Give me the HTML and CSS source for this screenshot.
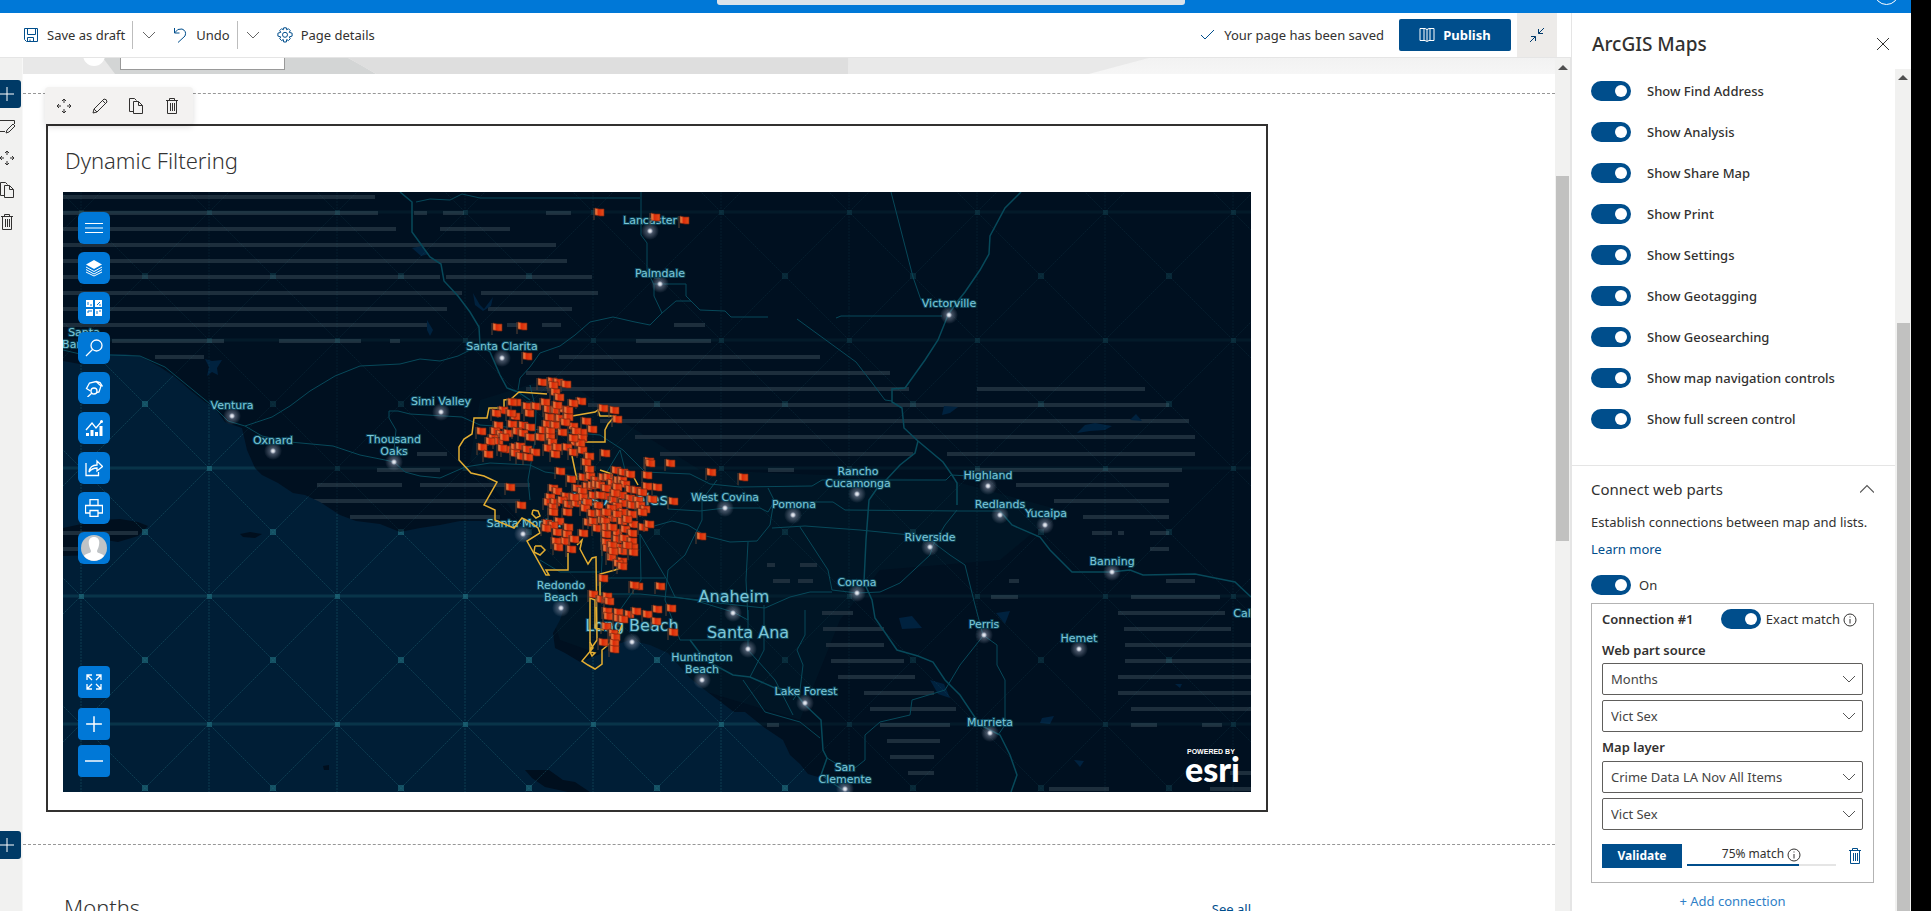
FILE: index.html
```
<!DOCTYPE html>
<html lang="en">
<head>
    <meta charset="UTF-8">
    <title>ArcGIS Maps - edit page</title>
    <link rel="stylesheet" href="styles.css">
</head>
<body>
    <!-- shared icons -->
    <svg class="sprite" aria-hidden="true">
        <symbol id="i-move" viewBox="0 0 16 16"><path d="M8 1v4M8 11v4M1 8h4M11 8h4M6 3l2-2 2 2M6 13l2 2 2-2M3 6L1 8l2 2M13 6l2 2-2 2"/></symbol>
        <symbol id="i-pencil" viewBox="0 0 16 16"><path d="M1 15l1-4L12 1q3 0 3 3L5 14zM2 11l3 3M10.500 2.500l3 3"/></symbol>
        <symbol id="i-copy" viewBox="0 0 16 16"><path d="M5.500 13.500h-4v-13h5l2 2M5.500 3.500h5l4 4v8h-9zM10.500 3.500v4h4"/></symbol>
        <symbol id="i-trash" viewBox="0 0 16 16"><path d="M2 2.500h12M5.500 2.500v-2h5v2M3.500 2.500v13h9v-13M6.500 5v8M8.500 5v8M10.500 5v8"/></symbol>
        <symbol id="i-plus" viewBox="0 0 16 16"><path d="M8 1v14M1 8h14"/></symbol>
        <symbol id="i-down" viewBox="0 0 12 12"><path d="M0 3l6 6 6-6"/></symbol>
        <symbol id="i-info" viewBox="0 0 14 14"><circle cx="7" cy="7" r="6"/><path d="M7 6v4.500M7 3.500v1"/></symbol>
    </svg>

    <header class="suite">
        <div class="suite_search"></div>
        <div class="suite_user"></div>
    </header>

    <div class="app">
        <div class="editor">
            <div class="bar">
                <button type="button" class="cmd">
                    <svg class="ico" viewBox="0 0 16 16"><path d="M1.500 1.500h13v13h-11l-2-2zM4.500 1.500v6h8v-6M4.500 14.500v-4h6v4M7 14.500v-2"/></svg>
                    Save as draft
                </button>
                <button type="button" class="cmd_more" aria-label="More save options"><svg class="ico"><use href="#i-down"/></svg></button>
                <button type="button" class="cmd">
                    <svg class="ico" viewBox="0 0 16 16"><path d="M2.500 1v5h5M2.500 6q3-5 7.500-4 5 2 3 7L6 15.500"/></svg>
                    Undo
                </button>
                <button type="button" class="cmd_more" aria-label="More undo options"><svg class="ico"><use href="#i-down"/></svg></button>
                <button type="button" class="cmd">
                    <svg class="ico" viewBox="0 0 16 16"><path d="M6.700.8h2.600l.4 2 1.700-1.100 1.900 1.900-1.100 1.700 2.900.9v2.900l-2.900.8 1.100 1.800-1.900 1.900-1.700-1.100-.4 2.500H6.700l-.4-2.500-1.700 1.100-1.900-1.900 1.100-1.800-2.900-.8V6.200l2.900-.9-1.100-1.700 1.900-1.900 1.700 1.100z"/><circle cx="8" cy="7.800" r="2.500"/></svg>
                    Page details
                </button>
                <div class="bar_end">
                    <span class="saved">
                        <svg class="ico" viewBox="0 0 16 16"><path d="M1 8l4 4L14 3"/></svg>
                        Your page has been saved
                    </span>
                    <button type="button" class="publish">
                        <svg class="ico" viewBox="0 0 16 16"><path d="M1 1.500h5l2 1 2-1h5v12h-5l-2 1-2-1H1zM5 1.500v12M8 2v12M11 1.500v12"/></svg>
                        Publish
                    </button>
                    <button type="button" class="collapse" aria-label="Collapse">
                        <svg class="ico" viewBox="0 0 16 16"><path d="M15 1L9.500 6.500M9.500 2v4.500H14M1 15l5.500-5.500M2 9.500h4.500V14"/></svg>
                    </button>
                </div>
            </div>

            <div class="scroller">
                <div class="canvas">
                    <div class="banner">
                        <svg class="banner_art" viewBox="0 0 1531 16" preserveAspectRatio="xMinYMin slice"><path d="M0 0h80l15 16H0z" fill="#e8e8e8"/><path d="M80 0h245q15 8 28 16H92z" fill="#d3d5d5"/><path d="M325 0h500v16H353q-14-8-28-16z" fill="#dedede"/><path d="M825 0h300l-60 16H825z" fill="#e9e9e9"/><circle cx="71" cy="-3" r="11" fill="#fff"/></svg>
                        <div class="banner_box"></div>
                    </div>

                    <section class="section">
                        <div class="rail">
                            <button type="button" class="rail_add" aria-label="Add section"><svg class="ico"><use href="#i-plus"/></svg></button>
                            <button type="button" aria-label="Edit section"><svg class="ico" viewBox="0 0 16 16"><path d="M0 2.500h15.500V6M0 13.500h6M7 15l1-3 6-6 2 2-6 6z"/></svg></button>
                            <button type="button" aria-label="Move section"><svg class="ico"><use href="#i-move"/></svg></button>
                            <button type="button" aria-label="Duplicate section"><svg class="ico"><use href="#i-copy"/></svg></button>
                            <button type="button" aria-label="Delete section"><svg class="ico"><use href="#i-trash"/></svg></button>
                        </div>
                        <div class="section_body">
                            <div class="tools">
                                <button type="button" aria-label="Move web part"><svg class="ico"><use href="#i-move"/></svg></button>
                                <button type="button" aria-label="Edit web part"><svg class="ico"><use href="#i-pencil"/></svg></button>
                                <button type="button" aria-label="Duplicate web part"><svg class="ico"><use href="#i-copy"/></svg></button>
                                <button type="button" aria-label="Delete web part"><svg class="ico"><use href="#i-trash"/></svg></button>
                            </div>
                            <article class="card">
                                <h2>Dynamic Filtering</h2>
                                <div class="map">
                                    <svg id="map" class="map_svg" viewBox="63 192 1188 600" preserveAspectRatio="xMinYMin slice" role="img" aria-label="Map of Los Angeles area"></svg>
                                    <div class="map_btns map_top">
                                        <button type="button" aria-label="Menu"><svg class="ico" viewBox="0 0 18 18"><path d="M0 4.500h18M0 9h18M0 13.500h18"/></svg></button>
                                        <button type="button" aria-label="Layers"><svg class="ico" viewBox="0 0 18 18"><path class="fill" d="M9 1l8 4.500L9 10 1 5.500z"/><path d="M1 8l8 4.500L17 8M1 10.500L9 15l8-4.500M1 13l8 4 8-4"/></svg></button>
                                        <button type="button" aria-label="Basemaps"><svg class="ico" viewBox="0 0 18 18"><path class="fill" d="M1 1h7v7H1zM10 1h7v7h-7zM1 10h7v7H1zM10 10h7v7h-7z"/><path class="cut" d="M3 6V3M5 6h2M12 6l3-3M14 6h2M3 12h4M3 14v-2M12 12v3M14 12h2"/></svg></button>
                                        <button type="button" aria-label="Find address"><svg class="ico ico_bold" viewBox="0 0 18 18"><circle cx="11.500" cy="6.500" r="5.500"/><path d="M7.500 10.500L1 17"/></svg></button>
                                        <button type="button" aria-label="Geosearch"><svg class="ico ico_bold" viewBox="0 0 18 18"><path d="M5.500 12L1.500 9.500l3-5.500 6.500-1.500 5 4.500-2 6-2 .5M11 2.500l4 1 2.500 4"/><circle cx="9" cy="12" r="3"/><path d="M7 14l-4.500 4"/></svg></button>
                                        <button type="button" aria-label="Analysis"><svg class="ico ico_bold" viewBox="0 0 18 18"><path class="fill" d="M1 14h3v3H1zM5.500 11h3v6h-3zM10 13h3v4h-3zM14.500 7h3v10h-3z"/><path d="M1 11l6-7 4 5 6-7"/><circle class="fill" cx="16.500" cy="2.500" r="1.500"/></svg></button>
                                        <button type="button" aria-label="Share map"><svg class="ico ico_bold" viewBox="0 0 18 18"><path d="M1 4v12.500h12.500V13M4 13q1-7 8-7V2l5.500 5.500L12 12V9q-5 0-8 4z"/></svg></button>
                                        <button type="button" aria-label="Print"><svg class="ico ico_bold" viewBox="0 0 18 18"><path d="M5 6.500v-6h8v6M5 14H.500V6.500h17V14H13M5 11.500h8v6H5z"/></svg></button>
                                        <button type="button" aria-label="Account" class="map_user"><svg viewBox="0 0 26 26"><circle cx="13" cy="13" r="13" fill="#bfc3c6"/><path d="M13 2c4 0 6 3 5 8-.5 3-1.500 4-2 6 0 3 6 2 7 5a13 13 0 0 1-20 0c1-3 7-2 7-5-.5-2-1.500-3-2-6-1-5 1-8 5-8z" fill="#fff"/></svg></button>
                                    </div>
                                    <div class="map_btns map_bottom">
                                        <button type="button" aria-label="Full screen" class="map_full"><svg class="ico ico_bold" viewBox="0 0 18 18"><path d="M2 7V2h5M11 2h5v5M16 11v5h-5M7 16H2v-5M2 2l5 5M16 2l-5 5M16 16l-5-5M2 16l5-5"/></svg></button>
                                        <button type="button" aria-label="Zoom in"><svg class="ico ico_bold"><use href="#i-plus"/></svg></button>
                                        <button type="button" aria-label="Zoom out"><svg class="ico ico_bold" viewBox="0 0 16 16"><path d="M0 8h16"/></svg></button>
                                    </div>
                                    <div class="esri"><small>POWERED BY</small><b>esri</b></div>
                                </div>
                            </article>
                        </div>
                    </section>

                    <section class="section section_last">
                        <div class="rail">
                            <button type="button" class="rail_add" aria-label="Add section"><svg class="ico"><use href="#i-plus"/></svg></button>
                        </div>
                        <div class="section_body">
                            <div class="list_head">
                                <h2>Months</h2>
                                <a href="#">See all</a>
                            </div>
                        </div>
                    </section>
                </div>
                <div class="track track_main"><i></i><span></span></div>
            </div>
        </div>

        <aside class="panel">
            <div class="panel_head">
                <h1>ArcGIS Maps</h1>
                <button type="button" aria-label="Close"><svg class="ico" viewBox="0 0 16 16"><path d="M2 2l12 12M14 2L2 14"/></svg></button>
            </div>
            <div class="panel_scroll">
                <div class="panel_body">
                    <div class="options">
                        <label><input type="checkbox" class="toggle" checked>Show Find Address</label>
                        <label><input type="checkbox" class="toggle" checked>Show Analysis</label>
                        <label><input type="checkbox" class="toggle" checked>Show Share Map</label>
                        <label><input type="checkbox" class="toggle" checked>Show Print</label>
                        <label><input type="checkbox" class="toggle" checked>Show Settings</label>
                        <label><input type="checkbox" class="toggle" checked>Show Geotagging</label>
                        <label><input type="checkbox" class="toggle" checked>Show Geosearching</label>
                        <label><input type="checkbox" class="toggle" checked>Show map navigation controls</label>
                        <label><input type="checkbox" class="toggle" checked>Show full screen control</label>
                    </div>

                    <div class="connect">
                        <button type="button" class="connect_head">Connect web parts <svg class="ico"><use href="#i-down"/></svg></button>
                        <p>Establish connections between map and lists.</p>
                        <p><a href="#">Learn more</a></p>
                        <label class="connect_on"><input type="checkbox" class="toggle" checked>On</label>

                        <div class="conn">
                            <div class="conn_head">
                                <strong>Connection #1</strong>
                                <label><input type="checkbox" class="toggle" checked>Exact match</label>
                                <svg class="ico info"><use href="#i-info"/></svg>
                            </div>
                            <label class="conn_label" for="source">Web part source</label>
                            <div class="pick"><select id="source"><option>Months</option></select><svg class="ico"><use href="#i-down"/></svg></div>
                            <div class="pick"><select aria-label="Source field"><option>Vict Sex</option></select><svg class="ico"><use href="#i-down"/></svg></div>
                            <label class="conn_label" for="layer">Map layer</label>
                            <div class="pick"><select id="layer"><option>Crime Data LA Nov All Items</option></select><svg class="ico"><use href="#i-down"/></svg></div>
                            <div class="pick"><select aria-label="Layer field"><option>Vict Sex</option></select><svg class="ico"><use href="#i-down"/></svg></div>
                            <div class="conn_foot">
                                <button type="button" class="validate">Validate</button>
                                <div class="match">
                                    <span>75% match <svg class="ico info"><use href="#i-info"/></svg></span>
                                    <div class="match_bar"><div style="width:75%"></div></div>
                                </div>
                                <button type="button" class="conn_del" aria-label="Delete connection"><svg class="ico"><use href="#i-trash"/></svg></button>
                            </div>
                        </div>
                        <a href="#" class="add">+ Add connection</a>
                    </div>
                </div>
                <div class="track track_panel"><i></i><span></span></div>
            </div>
        </aside>
        <div class="edge"></div>
    </div>

    <script src="map.js"></script>
</body>
</html>
```
FILE: styles.css
```
*{padding:0;margin:0;box-sizing:border-box;}
html,body{height:100%;}
body{display:flex;flex-direction:column;overflow:hidden;background:#fff;color:#323130;font:13px/20px "Noto Sans","Open Sans",sans-serif;}
button{font:inherit;color:inherit;background:none;border:none;display:flex;align-items:center;justify-content:center;}
a{color:#004e8c;text-decoration:none;}
.sprite{position:absolute;width:0;height:0;}
.ico{width:16px;height:16px;flex:none;fill:none;stroke:currentColor;stroke-width:1;}

/* top bar */
.suite{height:13px;flex:none;background:#0078d7;border-right:20px solid #000;padding-right:10px;display:flex;justify-content:center;position:relative;overflow:hidden;}
.suite_search{width:468px;height:5px;background:#dbe3ea;border-radius:0 0 3px 3px;}
.suite_user{position:absolute;right:12px;top:-20px;width:25px;height:25px;border:1px solid #fff;border-radius:50%;}

.app{flex:1;min-height:0;display:flex;}
.editor{flex:1;min-width:0;display:flex;flex-direction:column;}
.edge{width:20px;background:#000;}

/* command bar */
.bar{height:45px;flex:none;display:flex;align-items:center;padding-left:23px;border-bottom:1px solid #e5e5e5;padding-right:14px;}
.cmd{gap:8px;padding-right:7px;}
.cmd .ico,.saved .ico{color:#004e8c;}
.cmd_more{width:40px;height:28px;border-left:1px solid #bdbdbd;padding-right:8px;color:#666;}
.cmd_more .ico{width:12px;height:12px;}
.bar_end{margin-left:auto;display:flex;align-items:center;align-self:stretch;}
.saved{display:flex;align-items:center;gap:8px;margin-right:15px;}
.publish{width:112px;height:32px;gap:8px;background:#004e8c;color:#fff;font-weight:700;border-radius:2px;margin-right:6px;}
.collapse{width:40px;align-self:stretch;background:#edebe9;color:#003a6c;}

/* page canvas */
.scroller{flex:1;min-height:0;display:flex;}
.canvas{flex:1;min-width:0;display:flex;flex-direction:column;overflow:hidden;background:linear-gradient(90deg,#f1f1f0 22px,#fff 23px);}
.banner{height:22px;flex:none;margin-left:23px;background:linear-gradient(#f2f2f2,#f6f6f6) top/100% 16px no-repeat #fff;position:relative;}
.banner_art{display:block;width:100%;height:16px;}
.banner_box{position:absolute;left:97px;top:0;width:165px;height:12px;background:#fff;border:1px solid #999;border-top:none;}
.section{display:flex;flex:none;}
.section_last{flex:1;}
.rail{width:23px;flex:none;}
.rail button{width:28px;height:28px;margin-left:-7px;margin-bottom:4px;}
.rail .rail_add{background:#003a66;color:#fff;border-radius:3px;}
.section_body{flex:1;min-width:0;margin-top:13px;border-top:1px dashed #979797;padding:30px 287px 19px 23px;position:relative;}
.tools{position:absolute;left:22px;top:-7px;height:37px;width:148px;padding:0 1px;display:flex;background:#f3f2f1;border-radius:4px;box-shadow:0 3px 6px #0002;}
.tools button{width:36px;}
h2{font-size:22px;line-height:32px;font-weight:300;color:#333;}

.card{border:2px solid #323130;padding:18px 15px 18px;}
.card h2{margin:0 2px 16px;}
.map{height:600px;position:relative;overflow:hidden;background:#001020;}
.map_svg{display:block;width:100%;height:100%;}
.map_btns{position:absolute;left:15px;display:flex;flex-direction:column;gap:8px;}
.map_top{top:20px;}
.map_bottom{bottom:15px;gap:5px;}
.map_btns button{width:32px;height:32px;border-radius:6px;background:#0078d7;color:#fff;}
.map_bottom button{border-radius:4px;}
.map_btns .map_full{margin-bottom:5px;}
.map_btns .ico{width:18px;height:18px;}
.map_btns .ico_bold{stroke-width:1.3;}
.map_btns .ico .fill{fill:#fff;stroke:none;}
.map_btns .ico .cut{stroke:#0078d7;}
.map_user svg{width:26px;height:26px;}
.esri{position:absolute;right:8px;bottom:10px;color:#fff;width:58px;}
.esri small{display:block;font:700 7px/8px "Liberation Sans",sans-serif;white-space:nowrap;margin-left:2px;}
.esri b{display:block;font:900 34px/26px Lato,sans-serif;}

/* map drawing */
.sea{fill:#001e36;}
.isle{fill:#000f1e;}
.lake{fill:#00223f;}
.urban{fill:#001525;}
.stripe{stroke:#1d2e3c;stroke-width:4;}
.road{fill:none;stroke:#07495a;stroke-width:1;}
.road_main{stroke-width:1.5;}
.border{fill:none;stroke:#e3ae32;stroke-width:1.5;}
.city{font:11px "DejaVu Sans",sans-serif;fill:#7cc6d8;text-anchor:middle;paint-order:stroke;stroke:#0b4054;stroke-width:2px;}
.city_big{font-size:16px;}

.list_head{display:flex;justify-content:space-between;align-items:center;padding:13px 17px 0 18px;height:50px;}
.list_head a{padding-top:4px;}

/* scroll bars */
.track{flex:none;background:#f1f1f0;display:flex;flex-direction:column;align-items:center;}
.track i{border:5px solid transparent;border-top:none;border-bottom:5px solid #505050;}
.track span{width:13px;background:#c1c1c0;}
.track_main{width:16px;padding-top:7px;border-right:1px solid #e5e5e5;}
.track_main span{height:365px;margin-top:106px;}
.track_panel{width:16px;padding-top:6px;}
.track_panel span{flex:1;margin-top:243px;}

/* property panel */
.panel{width:340px;flex:none;display:flex;flex-direction:column;border-left:1px solid #e5e5e5;}
.panel_head{height:56px;flex:none;display:flex;justify-content:space-between;align-items:center;padding:6px 20px 0;}
h1{font-size:19px;line-height:28px;font-weight:500;}
.panel_scroll{flex:1;min-height:0;display:flex;}
.panel_body{flex:1;min-width:0;overflow:hidden;}
.options{padding:12px 19px 36px;display:flex;flex-direction:column;gap:21px;border-bottom:1px solid #e5e5e5;font-weight:500;}
.options label{display:flex;align-items:center;gap:16px;}
.toggle{appearance:none;flex:none;width:40px;height:20px;border-radius:10px;background:#004e8c;display:flex;justify-content:flex-end;align-items:center;padding-right:4px;}
.toggle::after{content:"";width:12px;height:12px;border-radius:50%;background:#fff;}

.connect{padding:0 21px 0 19px;}
.connect_head{width:100%;height:46px;justify-content:space-between;font-size:15px;}
.connect_head .ico{width:14px;height:14px;transform:rotate(180deg);color:#555;}
.connect p{height:27px;white-space:nowrap;}
.connect_on{display:flex;align-items:center;gap:8px;margin-top:9px;height:20px;}
.conn{border:1px solid #b3b3b3;margin-top:8px;padding:5px 10px 14px;}
.conn_head{display:flex;align-items:center;height:20px;}
.conn_head label{margin-left:auto;display:flex;align-items:center;gap:5px;}
.info{width:14px;height:14px;vertical-align:middle;}
.conn_head .info{margin:2px 6px 0 3px;}
strong,.conn_label{font-weight:600;}
.conn_label{display:block;height:20px;margin-top:11px;margin-bottom:3px;}
.pick{position:relative;margin-bottom:5px;}
.pick select{appearance:none;width:100%;height:32px;border:1px solid #605e5c;border-radius:2px;background:#fff;color:#444;font:inherit;padding:0 8px;}
.pick .ico{position:absolute;right:8px;top:10px;width:12px;height:12px;color:#555;pointer-events:none;}
.pick + .conn_label{margin-top:4px;margin-bottom:4px;}
.conn_foot{display:flex;align-items:center;margin-top:14px;height:24px;}
.validate{width:80px;height:24px;background:#004e8c;color:#fff;font-weight:700;font-size:12px;}
.match{flex:1;margin:0 11px 0 5px;text-align:center;font-size:12px;line-height:16px;}
.match_bar{height:2px;background:#e5e5e5;margin-top:2px;}
.match_bar div{height:2px;background:#004e8c;}
.conn_del{color:#004e8c;}
.add{display:block;text-align:center;margin-top:8px;color:#2f7fc7;}
```
FILE: map.js
```
const svg = document.getElementById('map');

// [y, x1, x2, x1, x2 ...]
const stripes = [
    [196,63,375],[212,63,378,414,427,443,464,546,571],[228,63,396,440,510],[244,63,556],[260,63,567],
    [276,63,440,446,592],[292,63,462,481,598],[308,63,447,488,572],[324,63,427,507,527,542,561,674,705],
    [340,112,224,279,361,390,400,636,711],[356,155,204,559,820],[372,526,890],[388,526,909,977,1145],
    [404,588,1169],[420,600,1189],[436,635,1195],[453,417,447,660,913,947,1195],[469,377,440,768,794,975,1182],
    [484,317,402,420,530,1016,1169],[500,313,520,1054,1169],[516,350,500,1083,1169],[532,63,140,1092,1112,1118,1124,1150,1169],
    [548,63,140,1150,1169],[564,767,775,800,817],[580,773,790,798,813,1009,1019,1166,1195],[596,991,1018,1131,1220],
    [612,822,853,1118,1225],[628,823,884,1124,1231],[644,826,884,1125,1251],[660,831,904,1125,1251],
    [676,838,915,1118,1251],[692,864,934,1118,1251],[708,870,956,1131,1251],[724,767,779,880,950,1131,1157,1202,1222],
    [740,887,940],[756,890,934],[772,908,934,1230,1251],[788,1049,1109,1210,1251]
];

const sea = '63,361 80,364 110,354 125,354 140,356 160,367 175,377 190,390 205,402 215,408 225,422 242,428 247,450 255,468 262,475 278,483 293,493 305,495 320,502 340,515 356,521 380,524 400,532 420,528 440,525 460,521 480,521 500,522 521,523 530,545 545,568 550,580 558,592 565,605 560,620 553,633 555,648 565,653 580,662 600,654 612,646 630,640 650,645 668,653 690,678 705,690 734,712 745,712 765,728 783,740 790,755 800,764 808,774 825,779 842,782 850,792 63,792';

const isles = [
    '63,528 100,520 120,519 138,522 148,526 138,536 118,542 106,540 95,555 63,556',
    '525,770 549,770 563,780 575,782 590,792 568,792 545,787 532,778',
    '323,766 329,765 329,770 324,770',
    '240,534 250,532 262,534 255,538 243,537'
];

const lakes = [
    '205,359 212,361 222,360 217,368 218,375 212,372 207,376 209,367',
    '412,248 422,246 429,254 421,256','427,320 433,330 430,336 427,330','473,293 480,305 484,309 493,297 491,306 483,311 475,305',
    '1077,433 1085,425 1095,423 1112,426 1105,430 1090,431','1130,420 1136,414 1142,421','944,406 958,407 950,413 942,415',
    '899,618 912,616 922,628 902,629','996,613 1010,611 1005,624','930,680 944,684 950,698 938,694','1042,718 1054,716 1050,724 1040,723','1074,760 1084,761 1080,767','1175,684 1182,684 1180,688'
];

const mainRoads = [
    '400,192 412,202 412,232 420,243 430,257 441,264 444,281 458,296 470,312 479,327 480,345 490,352 500,375 507,388 518,392 530,400',
    '1021,192 1005,208 990,236 989,254 980,270 965,292 957,302 948,315 938,340 925,360 905,388 892,389 892,402 902,408 904,428 918,441 943,462 952,475 957,483 957,505',
    '918,441 915,453 900,465 887,479 878,487 869,500 866,540 864,582 872,600 875,618 897,650 918,656 933,662 945,680 960,695 980,725 1000,735 1010,755 1017,775 1011,792',
    '690,640 705,660 733,675 750,677 775,688 793,690 805,705 821,720 823,750 827,758 821,775 843,790',
    '1000,511 1012,525 1040,537 1050,550 1072,572 1110,572 1130,570 1143,575 1195,574 1235,582 1251,597'
];

const roads = [
    '416,202 430,199 450,200 462,194 480,198 640,198',
    '63,350 80,354 140,356 165,367 215,408 228,421 245,426 272,417 290,406 310,391 335,376 360,366 400,364 420,359 440,361 458,356 470,350',
    '245,426 262,436 290,442 333,446 360,455 385,460 394,462 405,472 420,476 440,478 465,467 490,463 530,465 545,472 575,476 605,480',
    '394,450 396,430 389,418 389,411 398,411 410,414 462,417 480,425 520,428 600,435 623,450 633,460 645,472 690,474 710,484 740,487 812,486 822,480 946,480 951,475 970,476',
    '641,192 641,235 647,243 647,270 654,285 654,296 662,313 650,325 635,322 613,317 590,322 575,335 560,346 540,353 530,367 520,378 518,390',
    '654,284 686,284 686,296 700,310 725,311 731,317 768,317',
    '662,313 676,301 691,301','797,319 856,362 873,384 885,400 892,401','836,318 841,316 942,316','891,192 913,277 921,300',
    '668,509 700,511 725,508 760,508 768,512 774,502 833,502 845,510 960,511 1000,511',
    '772,528 805,526 860,530 910,535 930,540 950,555 965,565 975,605 983,635 997,645 997,665 1005,680 1005,725 998,735',
    '957,510 945,525 933,545 930,555 900,583 880,592 857,593',
    '640,530 672,521 688,525 706,536 730,542 757,541 770,525 774,500 768,488',
    '800,527 815,550 828,570 832,590 857,593','832,592 810,592 790,597 765,608 755,607 700,601 675,597 667,580 640,534',
    '640,534 641,580 620,610 620,640','602,480 620,450 625,470','600,510 602,560 600,600','530,385 536,410 535,440 528,480 530,500',
    '717,480 702,500 702,520 685,555 668,570 665,600 680,640 750,640','748,542 746,580 748,620 733,612 700,602',
    '805,610 805,635 797,650 803,665 800,690 793,700','748,610 748,650 775,680 793,715','764,605 764,650 750,677',
    '743,680 765,712 800,722 820,738','983,636 960,665 945,690 912,700 910,715 880,722 865,735 865,760 850,772 827,758',
    '602,578 665,578','540,560 560,572 600,572','700,600 640,594 600,594'
];

const border = [
    '572,416 595,412 598,410 600,416 615,416 608,424 605,430 605,442 585,442',
    '547,394 519,392 511,399 504,400 504,408 489,408 487,418 474,418 472,434 464,439 459,447 459,460 471,473 484,476 497,482 484,505 495,510 495,520 514,528 522,518 530,522 538,528 540,533 527,541 546,575 549,575 546,570 568,570 568,553',
    '572,456 577,480','600,470 612,474','632,474 638,485','533,510 538,511 540,516 536,518 532,514 533,510','535,546 541,546 545,550 540,555 534,552 535,546',
    '577,545 582,540 580,549 588,564 592,558 596,557 597,640 590,650 590,598 595,600 595,628 604,630','600,602 600,574 615,570 620,568',
    '590,642 593,648 582,661 588,665 595,669 602,664 602,650 608,645 618,635 622,625','590,652 595,653 592,656 590,652'
];

// flag positions, x,y pairs
const flags = `599,212 655,217 684,220 497,327 522,326 527,356
542,382 552,381 558,382 553,385 566,384 555,392 559,397 581,401 573,403 603,408 614,410 617,419 586,421 592,429 516,402 512,402 527,406 536,406 545,402
503,410 496,413 529,413 515,416 511,413 548,409 555,410 564,409 557,405 568,410 555,418 549,417 560,418 568,417 547,424 555,425 543,430 562,432 573,426 565,422 550,431
498,425 512,424 523,425 530,427 481,431 495,431 501,434 508,433 517,431 523,433 493,438 498,441 504,437 490,441 530,437 540,437 550,437 552,442 582,432 576,431 582,438 575,442 580,443 573,438
482,447 488,454 506,449 515,447 520,446 502,448 527,449 535,452 515,453 521,456 528,457 548,448 557,447 555,454 567,447 573,452 582,450 589,456 586,462 589,469 605,453
649,461 650,463 670,463 711,472 743,477 560,471 571,479 510,487 521,505 647,475 657,487 673,501 701,536
583,477 590,476 596,480 603,477 608,477 616,470 623,472 630,474 577,488 587,486 592,485 596,484 600,485 612,483 618,480 622,480 625,484 617,487 630,489 636,490 647,486 642,492 606,488 582,491
553,488 557,491 566,496 550,497 548,502 555,502 553,507 553,512 562,500 568,504 576,503 583,497 593,495 587,502 598,505 607,496 613,500 622,495 630,498 638,500 652,499 623,503 632,505 640,505 645,509 600,495 615,493 574,497 617,506
567,512 585,508 592,513 600,513 611,508 623,512 632,514 642,512 588,522 593,521 602,520 612,518 606,512 617,514 622,521 633,524 643,527 649,524 605,521 627,519
547,523 559,521 553,525 568,527 546,528 557,532 567,534 583,533 565,541 574,539 556,541 571,549 558,547 597,528 606,527 617,532 625,529 632,533 612,527 606,534 606,542 617,539 624,538 632,541 607,548 620,547 633,547 622,551 633,552 611,557 622,561 618,563 622,566 612,545 627,545 613,551
603,578 638,586 634,585 660,586 593,594 601,599 607,596 609,601 657,609 671,608 607,611 618,612 629,614 636,611 608,616 618,618 623,619 647,614 656,621 673,632 606,626 613,633 615,637 614,643 603,642 614,649`;

// [name (| breaks the line), label x, baseline of last line, dot x, dot y, big]
const cities = [
    ['Santa|Barbara',84,348],['Ventura',232,409,232,416],['Oxnard',273,444,273,451],['Thousand|Oaks',394,455,394,462],
    ['Simi Valley',441,405,441,412],['Santa Clarita',502,350,502,358],['Lancaster',650,224,650,231],['Palmdale',660,277,660,284],
    ['Victorville',949,307,949,315],['Santa Monica',524,527,523,534],['Los Angeles',620,505,0,0,1],['West Covina',725,501,725,508],
    ['Pomona',794,508,793,515],['Rancho|Cucamonga',858,487,857,494],['Highland',988,479,988,486],['Redlands',1000,508,1000,515],
    ['Yucaipa',1046,517,1045,525],['Riverside',930,541,930,547],['Banning',1112,565,1112,572],['Corona',857,586,857,593],
    ['Perris',984,628,984,635],['Hemet',1079,642,1079,649],['Murrieta',990,726,990,733],['Cal',1242,617],
    ['Lake Forest',806,695,805,703],['San|Clemente',845,783,845,789],['Huntington|Beach',702,673,702,680],['Redondo|Beach',561,601,561,608],
    ['Anaheim',734,602,733,613,1],['Santa Ana',748,638,748,649,1],['Long Beach',632,631,632,642,1]
];

const line = cls => p => `<polyline class="${cls}" points="${p}"/>`;
const poly = cls => p => `<polygon class="${cls}" points="${p}"/>`;

let out = `<defs>
    <pattern id="grid" x="49" y="180" width="128" height="128" patternUnits="userSpaceOnUse">
        <path d="M0 0L128 128M64 0L0 64M128 64L64 128M32 0V128" fill="none" stroke="#2b8b98" stroke-opacity=".3" stroke-dasharray="2 1"/>
        <path d="M0 32H128" stroke="#2b8b98" stroke-opacity=".22" stroke-width="3"/>
        <path d="M30 30h5v5h-5zM93 93h6v6h-6z" fill="#2b8b98" fill-opacity=".55"/>
    </pattern>
    <radialGradient id="glow">
        <stop offset="0" stop-color="#fff"/><stop offset=".2" stop-color="#c5ccdb" stop-opacity=".9"/>
        <stop offset=".35" stop-color="#8a93a8" stop-opacity=".5"/><stop offset="1" stop-color="#8a93a8" stop-opacity="0"/>
    </radialGradient>
    <linearGradient id="red" x2="1" y2="0"><stop offset="0" stop-color="#f09a55"/><stop offset=".4" stop-color="#dc2a08"/><stop offset="1" stop-color="#e0501c"/></linearGradient>
    <g id="flag"><path d="M-5 -4V8" stroke="#5b4334"/><path d="M-4 -4L0 -3 5 -3V4L1 4 -4 3z" fill="url(#red)" stroke="#7a2410" stroke-width=".7"/></g>
</defs>`;

out += poly('urban')('480,400 560,375 620,420 700,470 950,480 1060,510 1000,560 880,570 840,620 800,720 700,690 560,640 520,520 470,460');
out += stripes.map(([y, ...xs]) => {
    let d = '';
    for(let i = 0; i < xs.length; i += 2) d += `M${xs[i]} ${y + 1}H${xs[i + 1]}`;
    return `<path class="stripe" d="${d}"/>`;
}).join('');
// the sea lies over the stripes, the islands over the sea
out += poly('sea')(sea) + isles.map(poly('isle')).join('') + lakes.map(poly('lake')).join('');
out += '<path class="stripe" d="M63 533H138M63 549H100"/>';
out += '<rect x="63" y="192" width="1188" height="600" fill="url(#grid)" opacity=".35"/>';
out += `<polygon points="${sea}" fill="url(#grid)" opacity=".6"/>`;
out += roads.map(line('road')).join('') + mainRoads.map(line('road road_main')).join('');

out += cities.map(([name, x, y, dx, dy, big]) => {
    const parts = name.split('|');
    const dot = dx ? `<circle cx="${dx}" cy="${dy}" r="9" fill="url(#glow)"/>` : '';
    return dot + parts.map((t, i) => `<text class="city${big ? ' city_big' : ''}" x="${x}" y="${y - (parts.length - 1 - i) * 12}">${t}</text>`).join('');
}).join('');

out += border.map(line('border')).join('');
out += flags.split(/\s+/).map(p => {
    const [x, y] = p.split(',');
    return `<use href="#flag" x="${x}" y="${y}"/>`;
}).join('');

svg.innerHTML = out;
```
